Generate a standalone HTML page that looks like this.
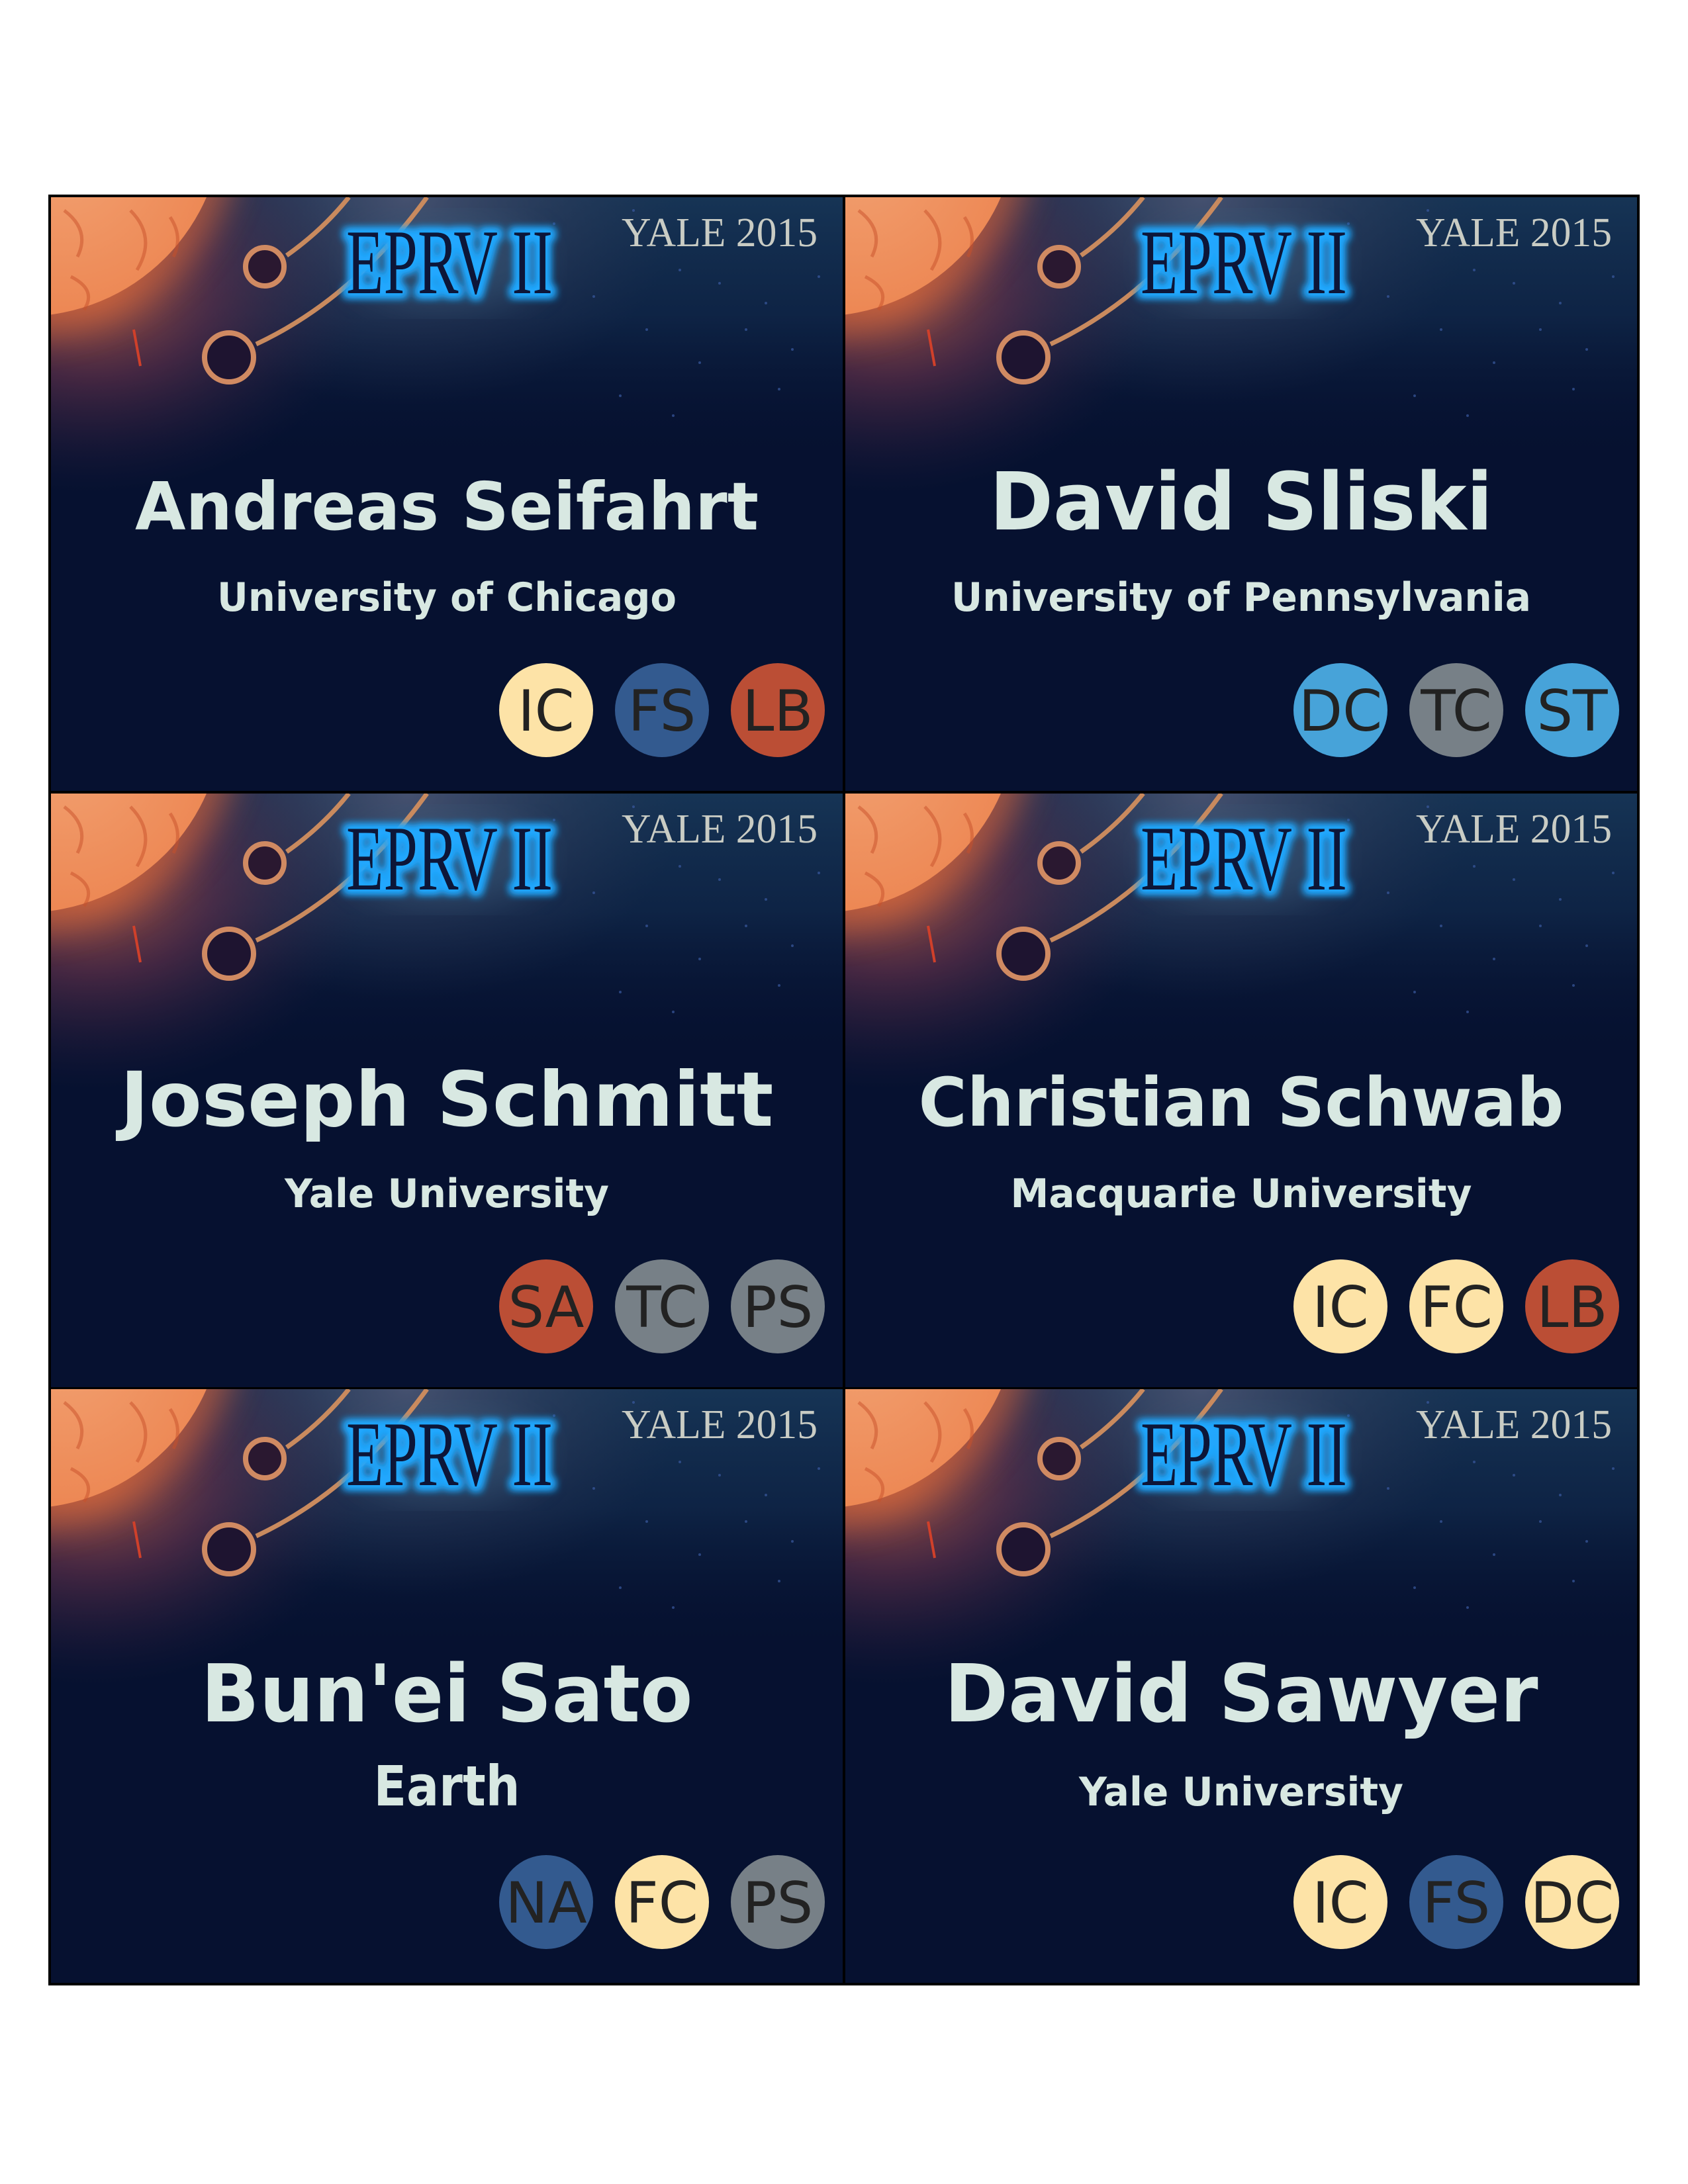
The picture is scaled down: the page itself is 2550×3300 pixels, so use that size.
<!DOCTYPE html>
<html><head><meta charset="utf-8"><style>
html,body{margin:0;padding:0;background:#fff;}
svg{display:block}
</style></head><body>
<svg width="2550" height="3300" viewBox="0 0 2550 3300" xmlns="http://www.w3.org/2000/svg">
<defs>
<clipPath id="cc"><rect x="0" y="0" width="1196" height="897"/></clipPath>
<linearGradient id="vg" x1="0" y1="0" x2="0" y2="1">
<stop offset="0" stop-color="#163455" stop-opacity="1"/>
<stop offset="0.2" stop-color="#10284a" stop-opacity="0.8"/>
<stop offset="0.45" stop-color="#061130" stop-opacity="0"/>
</linearGradient>
<radialGradient id="mg" cx="0.45" cy="0" r="0.35">
<stop offset="0" stop-color="#4a5472" stop-opacity="0.9"/>
<stop offset="1" stop-color="#2a3452" stop-opacity="0"/>
</radialGradient>
<radialGradient id="pg" cx="0.05" cy="0.15" r="0.35">
<stop offset="0" stop-color="#c06040" stop-opacity="0.9"/>
<stop offset="0.45" stop-color="#6a3048" stop-opacity="0.6"/>
<stop offset="1" stop-color="#2a1e40" stop-opacity="0"/>
</radialGradient>
<radialGradient id="sg" cx="0.6" cy="0.6" r="0.6">
<stop offset="0" stop-color="#f2a070"/>
<stop offset="0.75" stop-color="#ec8450"/>
<stop offset="1" stop-color="#e06838"/>
</radialGradient>
<filter id="gl" x="-20%" y="-40%" width="140%" height="180%">
<feMorphology in="SourceAlpha" operator="dilate" radius="6" result="d"/>
<feGaussianBlur in="d" stdDeviation="6" result="b"/>
<feFlood flood-color="#22a8ff"/>
<feComposite in2="b" operator="in" result="g"/>
<feMerge><feMergeNode in="g"/><feMergeNode in="g"/><feMergeNode in="SourceGraphic"/></feMerge>
</filter>
<filter id="bl"><feGaussianBlur stdDeviation="25"/></filter>
<g id="bgc">
<rect width="1196" height="897" fill="#061130"/>
<rect width="1196" height="897" fill="url(#vg)"/>
<rect width="1196" height="897" fill="url(#mg)"/>
<rect width="1196" height="897" fill="url(#pg)"/>
<ellipse cx="600" cy="100" rx="150" ry="70" fill="#3a6080" opacity="0.4" filter="url(#bl)"/>
<g fill="#3a5aa0" opacity="0.7">
<circle cx="880" cy="20" r="2"/><circle cx="950" cy="110" r="2"/><circle cx="1010" cy="130" r="2"/><circle cx="1080" cy="160" r="2"/><circle cx="900" cy="200" r="2"/><circle cx="1120" cy="230" r="2"/><circle cx="980" cy="250" r="2"/><circle cx="1050" cy="200" r="2"/><circle cx="860" cy="300" r="2"/><circle cx="1160" cy="120" r="2"/><circle cx="760" cy="40" r="2"/><circle cx="820" cy="150" r="2"/><circle cx="1100" cy="290" r="2"/><circle cx="940" cy="330" r="2"/>
</g>
<circle cx="-40" cy="-120" r="330" fill="#e06a3a" opacity="0.6" filter="url(#bl)"/>
<circle cx="-40" cy="-120" r="300" fill="url(#sg)"/>
<path d="M20,20 Q60,50 40,90 M120,20 Q160,60 130,110 M30,120 Q70,140 50,170 M180,30 Q200,60 185,90" stroke="#c8502a" stroke-width="5" fill="none" opacity="0.5"/>
<path d="M125,200 L135,255" stroke="#d0402a" stroke-width="4"/>
<path d="M356,88 Q410,50 450,0" stroke="#c98a5e" stroke-width="7" fill="none"/>
<path d="M310,222 Q457,153 568,0" stroke="#c98a5e" stroke-width="7" fill="none"/>
<circle cx="323" cy="105" r="29" fill="#2a1830" stroke="#d08a62" stroke-width="8"/>
<circle cx="269" cy="242" r="37" fill="#1e1430" stroke="#d08a62" stroke-width="8"/>
<text x="446" y="145" font-family="Liberation Serif, serif" font-size="140" textLength="312" lengthAdjust="spacingAndGlyphs" fill="#0a1838" filter="url(#gl)">EPRV II</text>
<text x="862" y="74" font-family="Liberation Serif, serif" font-size="62" textLength="296" lengthAdjust="spacingAndGlyphs" fill="#c9ccc4">YALE 2015</text>
</g>
</defs>
<rect x="73" y="294" width="2404" height="2706" fill="#000"/>

<g transform="translate(77,298)" clip-path="url(#cc)" font-family="DejaVu Sans, sans-serif">
<use href="#bgc"/>
<text x="598" y="502" text-anchor="middle" font-weight="bold" font-size="100" fill="#d8e8e2" textLength="942" lengthAdjust="spacingAndGlyphs">Andreas Seifahrt</text>
<text x="598" y="625" text-anchor="middle" font-weight="bold" font-size="60" fill="#d8e8e2" textLength="694" lengthAdjust="spacingAndGlyphs">University of Chicago</text>
<circle cx="748" cy="775" r="71" fill="#fde3a7"/><text x="748" y="806" text-anchor="middle" font-size="86" fill="#222">IC</text>
<circle cx="923" cy="775" r="71" fill="#335a8f"/><text x="923" y="806" text-anchor="middle" font-size="86" fill="#222">FS</text>
<circle cx="1098" cy="775" r="71" fill="#bb4e35"/><text x="1098" y="806" text-anchor="middle" font-size="86" fill="#222">LB</text>
</g>
<g transform="translate(1277,298)" clip-path="url(#cc)" font-family="DejaVu Sans, sans-serif">
<use href="#bgc"/>
<text x="598" y="502" text-anchor="middle" font-weight="bold" font-size="120" fill="#d8e8e2" textLength="760" lengthAdjust="spacingAndGlyphs">David Sliski</text>
<text x="598" y="625" text-anchor="middle" font-weight="bold" font-size="60" fill="#d8e8e2" textLength="876" lengthAdjust="spacingAndGlyphs">University of Pennsylvania</text>
<circle cx="748" cy="775" r="71" fill="#47a3d9"/><text x="748" y="806" text-anchor="middle" font-size="86" fill="#222">DC</text>
<circle cx="923" cy="775" r="71" fill="#778087"/><text x="923" y="806" text-anchor="middle" font-size="86" fill="#222">TC</text>
<circle cx="1098" cy="775" r="71" fill="#47a3d9"/><text x="1098" y="806" text-anchor="middle" font-size="86" fill="#222">ST</text>
</g>
<g transform="translate(77,1199)" clip-path="url(#cc)" font-family="DejaVu Sans, sans-serif">
<use href="#bgc"/>
<text x="598" y="502" text-anchor="middle" font-weight="bold" font-size="114" fill="#d8e8e2" textLength="987" lengthAdjust="spacingAndGlyphs">Joseph Schmitt</text>
<text x="598" y="625" text-anchor="middle" font-weight="bold" font-size="60" fill="#d8e8e2" textLength="490" lengthAdjust="spacingAndGlyphs">Yale University</text>
<circle cx="748" cy="775" r="71" fill="#bb4e35"/><text x="748" y="806" text-anchor="middle" font-size="86" fill="#222">SA</text>
<circle cx="923" cy="775" r="71" fill="#778087"/><text x="923" y="806" text-anchor="middle" font-size="86" fill="#222">TC</text>
<circle cx="1098" cy="775" r="71" fill="#778087"/><text x="1098" y="806" text-anchor="middle" font-size="86" fill="#222">PS</text>
</g>
<g transform="translate(1277,1199)" clip-path="url(#cc)" font-family="DejaVu Sans, sans-serif">
<use href="#bgc"/>
<text x="598" y="502" text-anchor="middle" font-weight="bold" font-size="102" fill="#d8e8e2" textLength="975" lengthAdjust="spacingAndGlyphs">Christian Schwab</text>
<text x="598" y="625" text-anchor="middle" font-weight="bold" font-size="60" fill="#d8e8e2" textLength="697" lengthAdjust="spacingAndGlyphs">Macquarie University</text>
<circle cx="748" cy="775" r="71" fill="#fde3a7"/><text x="748" y="806" text-anchor="middle" font-size="86" fill="#222">IC</text>
<circle cx="923" cy="775" r="71" fill="#fde3a7"/><text x="923" y="806" text-anchor="middle" font-size="86" fill="#222">FC</text>
<circle cx="1098" cy="775" r="71" fill="#bb4e35"/><text x="1098" y="806" text-anchor="middle" font-size="86" fill="#222">LB</text>
</g>
<g transform="translate(77,2099)" clip-path="url(#cc)" font-family="DejaVu Sans, sans-serif">
<use href="#bgc"/>
<text x="598" y="502" text-anchor="middle" font-weight="bold" font-size="120" fill="#d8e8e2" textLength="743" lengthAdjust="spacingAndGlyphs">Bun'ei Sato</text>
<text x="598" y="629" text-anchor="middle" font-weight="bold" font-size="84" fill="#d8e8e2" textLength="221" lengthAdjust="spacingAndGlyphs">Earth</text>
<circle cx="748" cy="775" r="71" fill="#335a8f"/><text x="748" y="806" text-anchor="middle" font-size="86" fill="#222">NA</text>
<circle cx="923" cy="775" r="71" fill="#fde3a7"/><text x="923" y="806" text-anchor="middle" font-size="86" fill="#222">FC</text>
<circle cx="1098" cy="775" r="71" fill="#778087"/><text x="1098" y="806" text-anchor="middle" font-size="86" fill="#222">PS</text>
</g>
<g transform="translate(1277,2099)" clip-path="url(#cc)" font-family="DejaVu Sans, sans-serif">
<use href="#bgc"/>
<text x="598" y="502" text-anchor="middle" font-weight="bold" font-size="120" fill="#d8e8e2" textLength="897" lengthAdjust="spacingAndGlyphs">David Sawyer</text>
<text x="598" y="629" text-anchor="middle" font-weight="bold" font-size="60" fill="#d8e8e2" textLength="490" lengthAdjust="spacingAndGlyphs">Yale University</text>
<circle cx="748" cy="775" r="71" fill="#fde3a7"/><text x="748" y="806" text-anchor="middle" font-size="86" fill="#222">IC</text>
<circle cx="923" cy="775" r="71" fill="#335a8f"/><text x="923" y="806" text-anchor="middle" font-size="86" fill="#222">FS</text>
<circle cx="1098" cy="775" r="71" fill="#fde3a7"/><text x="1098" y="806" text-anchor="middle" font-size="86" fill="#222">DC</text>
</g>
</svg>
</body></html>
